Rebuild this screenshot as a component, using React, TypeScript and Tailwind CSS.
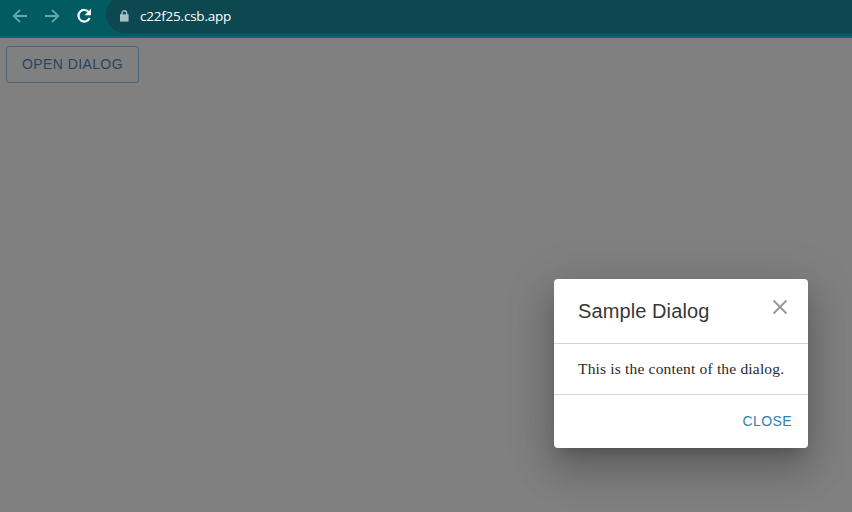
function BrowserBar() {
  return (
    <header className="flex h-[38px] border-b-2 border-[#0a6472] bg-[#015b60]">
      <div className="flex h-8 w-[106px] shrink-0 items-center gap-4 pl-3">
        <svg viewBox="0 0 16 16" className="size-4 shrink-0" fill="none" stroke="#62a9ab" strokeWidth="1.8">
          <path d="M15 8H2.2M8 1.8 1.8 8 8 14.2" />
        </svg>
        <svg viewBox="0 0 16 16" className="size-4 shrink-0" fill="none" stroke="#62a9ab" strokeWidth="1.8">
          <path d="M1 8h12.8M8 1.8 14.2 8 8 14.2" />
        </svg>
        <svg viewBox="0 0 16 16" className="size-4 shrink-0" fill="none" stroke="#fff" strokeWidth="2.2">
          <path d="M12.9 4.3A5.8 5.8 0 1 0 13.6 10" />
          <path d="M15 .8v6.4H8.6z" fill="#fff" stroke="none" />
        </svg>
      </div>
      <div className="-mt-1 flex h-[37px] flex-1 items-center rounded-l-full bg-[#0d474f] pl-3 pt-[3px]">
        <svg viewBox="0 0 12 12" className="size-3 shrink-0" fill="#a3c2c8">
          <path d="M2 4.3h8.6V11.6H2z" />
          <path d="M4 5V3a2.3 2.3 0 0 1 4.6 0v2" fill="none" stroke="#a3c2c8" strokeWidth="1.4" />
        </svg>
        <span className="-mt-px ml-[10px] font-['Open_Sans',sans-serif] text-[13.5px] leading-5 tracking-[-0.22px] text-white">c22f25.csb.app</span>
      </div>
    </header>
  );
}

function Dialog() {
  return (
    <section
      role="dialog"
      className="mr-11 mb-16 h-[169px] w-[254px] rounded bg-white shadow-[0_11px_15px_-7px_rgba(0,0,0,0.2),0_24px_38px_3px_rgba(0,0,0,0.14),0_9px_46px_8px_rgba(0,0,0,0.12)]"
    >
      <div className="flex h-16 items-center justify-between pr-5 pl-6">
        <h2 className="text-[20px] leading-8 tracking-[0.1px] text-[#383838]">Sample Dialog</h2>
        <button aria-label="Close" className="mb-2">
          <svg viewBox="0 0 16 16" className="size-4" fill="none" stroke="#999" strokeWidth="1.9">
            <path d="m1.5 1.5 13 13m0-13-13 13" />
          </svg>
        </button>
      </div>
      <div className="flex h-[52px] items-center border-y border-[#d4d4d4] px-6 font-['Liberation_Serif',serif] text-[15.5px] tracking-[0.18px] whitespace-nowrap text-[#2a2a2a]">
        This is the content of the dialog.
      </div>
      <div className="flex h-[53px] items-center justify-end pr-4 pb-0.5">
        <button className="text-[14px] leading-6 tracking-[0.4px] text-[#317eb8]">CLOSE</button>
      </div>
    </section>
  );
}

export default function App() {
  return (
    <div className="flex h-[512px] w-[852px] flex-col overflow-hidden bg-[#808080] font-['Liberation_Sans',Arial,sans-serif]">
      <BrowserBar />
      <main className="flex flex-1 flex-col justify-between">
        <button className="mt-2 ml-1.5 h-[37px] w-[133px] rounded-[3px] border border-[#4a6678] text-[14px] tracking-[0.4px] text-[#2b4460]">
          OPEN DIALOG
        </button>
        <div className="flex justify-end">
          <Dialog />
        </div>
      </main>
    </div>
  );
}
